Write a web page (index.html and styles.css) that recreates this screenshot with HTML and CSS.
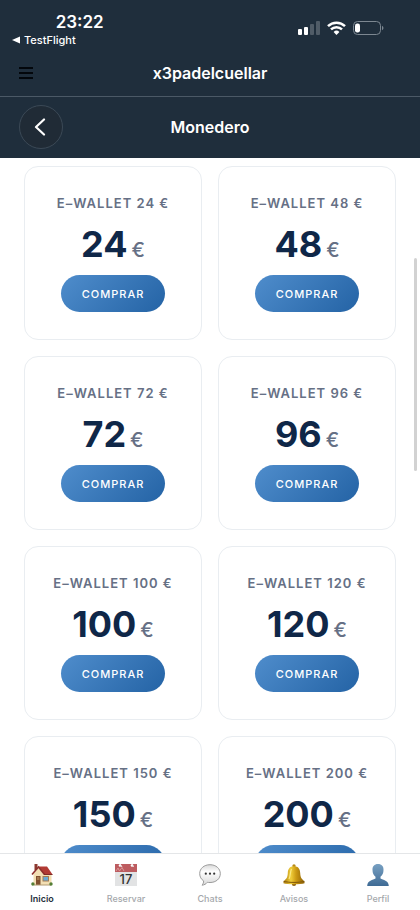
FILE: index.html
```html
<!DOCTYPE html>
<html lang="es">
<head>
<meta charset="utf-8">
<meta name="viewport" content="width=device-width, initial-scale=1">
<title>Monedero</title>
<link rel="stylesheet" href="styles.css">
</head>
<body>
<div class="app">
  <header class="top">
    <div class="status">
      <div class="status-left">
        <div class="clock">23:22</div>
        <a class="return" href="#"><svg width="8" height="8" viewBox="0 0 8 8" aria-hidden="true"><path d="M0 4 8 .5v7z" fill="#fff"/></svg>TestFlight</a>
      </div>
      <div class="status-icons">
        <svg width="22" height="14" viewBox="0 0 22 14" aria-hidden="true"><g fill="#fff"><rect x="0" y="8" width="4" height="6" rx="1"/><rect x="6" y="6" width="4" height="8" rx="1"/><g opacity=".22"><rect x="12" y="3" width="4" height="11" rx="1"/><rect x="18" y="0" width="4" height="14" rx="1"/></g></g></svg>
        <svg width="19" height="14" viewBox="0 0 19 14" aria-hidden="true"><g fill="none" stroke="#fff" stroke-width="2.5"><path d="M1 5.2a12.2 12.2 0 0 1 17 0"/><path d="M4 8.4a7.9 7.9 0 0 1 11 0"/></g><path d="M9.5 14 6.6 11a4.2 4.2 0 0 1 5.8 0z" fill="#fff"/></svg>
        <svg width="31" height="14" viewBox="0 0 31 14" aria-hidden="true"><rect x=".5" y=".5" width="27" height="13" rx="4" fill="none" stroke="#7c8791"/><rect x="2" y="2.5" width="5" height="9" rx="2.2" fill="#fff"/><path d="M29 4.8c2 .8 2 3.6 0 4.4z" fill="#7c8791"/></svg>
      </div>
    </div>
    <div class="bar club">
      <button class="menu" aria-label="Menú"><svg width="14" height="12" viewBox="0 0 14 12" aria-hidden="true"><path d="M0 1h14M0 6h14M0 11h14" stroke="#03070c" stroke-width="2"/></svg></button>
      <div class="title">x3padelcuellar</div>
    </div>
    <div class="bar section">
      <button class="back" aria-label="Volver"><svg width="12" height="18" viewBox="0 0 12 18" aria-hidden="true"><path d="M10 1.5 2 9l8 7.5" fill="none" stroke="#fff" stroke-width="2.2" stroke-linecap="round" stroke-linejoin="round"/></svg></button>
      <h1 class="title">Monedero</h1>
    </div>
  </header>

  <main class="wallets">
    <article class="card"><h2>E–WALLET 24 €</h2><p class="price">24<span>€</span></p><button class="buy">COMPRAR</button></article>
    <article class="card"><h2>E–WALLET 48 €</h2><p class="price">48<span>€</span></p><button class="buy">COMPRAR</button></article>
    <article class="card"><h2>E–WALLET 72 €</h2><p class="price">72<span>€</span></p><button class="buy">COMPRAR</button></article>
    <article class="card"><h2>E–WALLET 96 €</h2><p class="price">96<span>€</span></p><button class="buy">COMPRAR</button></article>
    <article class="card"><h2>E–WALLET 100 €</h2><p class="price">100<span>€</span></p><button class="buy">COMPRAR</button></article>
    <article class="card"><h2>E–WALLET 120 €</h2><p class="price">120<span>€</span></p><button class="buy">COMPRAR</button></article>
    <article class="card"><h2>E–WALLET 150 €</h2><p class="price">150<span>€</span></p><button class="buy">COMPRAR</button></article>
    <article class="card"><h2>E–WALLET 200 €</h2><p class="price">200<span>€</span></p><button class="buy">COMPRAR</button></article>
    <div class="scroll-thumb"></div>
  </main>

  <nav class="tabs">
    <a class="tab active" href="#">
      <svg width="22" height="22" viewBox="0 0 22 22" aria-hidden="true"><rect x="3.500" y="0" width="3" height="6" fill="#8c3a30"/><path d="M2.500 10 7.500 4l5.500 6h7.500v11h-18z" fill="#f3dfb4"/><path d="M7.500 2.500h8.500l5.500 8h-8.500z" fill="#b23a34"/><path d="M1 10.500 7.500 3l6 7.500" fill="none" stroke="#8e2f2b" stroke-width="1.600"/><path d="M13 10.500h8.500" stroke="#7d2b28"/><rect x="5" y="12" width="4.500" height="9" fill="#80502f"/><rect x="6" y="13" width="2.500" height="3" fill="#a5784d"/><rect x="12" y="12.500" width="5.500" height="4.500" fill="#69a9d6" stroke="#a37c55"/><path d="M3 21h17" stroke="#b29a72"/><circle cx="1.900" cy="20" r="1.700" fill="#547e35"/><circle cx="20" cy="20" r="1.700" fill="#547e35"/></svg>
      Inicio</a>
    <a class="tab" href="#">
      <svg width="22" height="22" viewBox="0 0 22 22" aria-hidden="true"><path d="M0 0h22v22H0z" fill="#e2e3e4"/><path d="M0 0h22v8H0z" fill="#bd5c60"/><path d="m1 7 2-3 1.500 3L7 3.500 9 7" fill="none" stroke="#d99797"/><circle cx="5" cy="1.500" r="1.300" fill="#fff"/><circle cx="17" cy="1.500" r="1.300" fill="#fff"/><path d="m5 0 2 3M17 0l1.500 3" stroke="#eee"/><text x="11" y="19.500" text-anchor="middle" class="day">17</text></svg>
      Reservar</a>
    <a class="tab" href="#">
      <svg width="22" height="22" viewBox="0 0 22 22" aria-hidden="true"><defs><linearGradient id="bubble" x2="0" y2="1"><stop stop-color="#d9d9d9"/><stop offset=".35" stop-color="#fff"/><stop offset="1" stop-color="#d8d8d8"/></linearGradient></defs><path d="M11 .7C5 .7.700 4.500.700 9.700c0 3.100 1.500 5.600 3.900 7.200.1 1.700-.5 3-1.600 4.300 2.200-.2 4-1.200 5.400-2.900.8.200 1.700.2 2.600.2 6 0 10.300-3.700 10.300-8.800S17 .7 11 .7z" fill="url(#bubble)" stroke="#9b9b9b"/><g fill="#333"><circle cx="6.800" cy="9.700" r="1.100"/><circle cx="11" cy="9.700" r="1.100"/><circle cx="15.200" cy="9.700" r="1.100"/></g></svg>
      Chats</a>
    <a class="tab" href="#">
      <svg width="22" height="22" viewBox="0 0 22 22" aria-hidden="true"><defs><linearGradient id="gold"><stop stop-color="#a97808"/><stop offset=".35" stop-color="#f1cf3c"/><stop offset=".6" stop-color="#cc9a13"/><stop offset="1" stop-color="#8d6108"/></linearGradient></defs><circle cx="11" cy="2" r="1.700" fill="#b68a17"/><circle cx="11" cy="19.800" r="2.200" fill="#8a5e10"/><path d="M11 2.200C6.500 2.200 5 5 4.800 9c-.2 4.300-1.300 6-4.300 8.200v2c4 1.500 17 1.500 21 0v-2c-3-2.200-4.100-3.900-4.300-8.200-.2-4-1.700-6.800-6.200-6.800z" fill="url(#gold)"/><path d="M.8 17.300c4.500 1.500 15.900 1.500 20.400 0" fill="none" stroke="#80570a"/><path d="M8.500 5C7 7.500 7.700 12 6 15" fill="none" stroke="#fae985" stroke-width="1.200"/></svg>
      Avisos</a>
    <a class="tab" href="#">
      <svg width="22" height="22" viewBox="0 0 22 22" aria-hidden="true"><defs><linearGradient id="person" x2="0" y2="1"><stop stop-color="#78a0c2"/><stop offset="1" stop-color="#3f6b95"/></linearGradient></defs><path d="M11 0C7.300 0 5.300 2.500 5.500 6c0 3 1.200 5.400 3 6.700v1.800C6 16.200.400 16 .200 22h21.600c-.2-6-5.800-5.800-8.300-7.500v-1.800c1.800-1.300 3-3.700 3-6.700.2-3.500-1.800-6-5.500-6z" fill="url(#person)"/></svg>
      Perfil</a>
  </nav>
</div>
</body>
</html>
```
FILE: styles.css
```css
* { box-sizing: border-box; }

body {
  margin: 0;
  font-family: Inter, "Liberation Sans", sans-serif;
  background: #fff;
}

h1, h2, p { margin: 0; }
a { color: inherit; text-decoration: none; }
button { border: 0; padding: 0; font: inherit; cursor: pointer; }
svg { display: block; }

.app {
  display: flex;
  flex-direction: column;
  height: 100vh;
}

.top {
  flex: none;
  background: #1f2e3c;
  color: #fff;
}

.status {
  display: flex;
  justify-content: space-between;
  padding: 12px 36px 0 12px;
}

.status-left {
  display: flex;
  flex-direction: column;
}

.clock {
  align-self: flex-end;
  font-size: 17px;
  line-height: 20px;
  font-weight: 600;
}

.return {
  display: flex;
  align-items: center;
  gap: 4px;
  margin-right: 28px;
  font-size: 11px;
  line-height: 16px;
  font-weight: 500;
}

.status-icons {
  display: flex;
  align-items: flex-start;
  gap: 7px;
  padding-top: 9px;
}

.bar {
  display: grid;
  grid-template-columns: 44px 1fr 44px;
  align-items: center;
  padding: 0 19px;
}

.club {
  min-height: 49px;
  padding-top: 2px;
  border-bottom: 1px solid #4b5966;
}

.section {
  min-height: 61px;
  padding-bottom: 2px;
}

.title {
  font-size: 16px;
  line-height: 20px;
  font-weight: 600;
  text-align: center;
}

.menu {
  justify-self: start;
  background: none;
}

.back {
  display: grid;
  place-items: center;
  width: 44px;
  height: 44px;
  padding-right: 3px;
  border: 1px solid #3b4956;
  border-radius: 50%;
  background: #202b36;
}

.wallets {
  position: relative;
  flex: 1;
  min-height: 0;
  overflow: hidden;
  display: grid;
  grid-template-columns: 1fr 1fr;
  align-content: start;
  gap: 16px;
  padding: 8px 24px;
}

.card {
  display: flex;
  flex-direction: column;
  align-items: center;
  padding: 27px 8px;
  border: 1px solid #e9edf1;
  border-radius: 14px;
  background: #fff;
}

.card h2 {
  font-size: 13px;
  line-height: 18px;
  font-weight: 600;
  letter-spacing: 1px;
  color: #667085;
  white-space: nowrap;
}

.price {
  display: flex;
  align-items: baseline;
  gap: 4px;
  padding: 10px 0 9px;
  font-size: 36px;
  line-height: 44px;
  font-weight: 700;
  color: #0f2748;
}

.price span {
  font-size: 20px;
  line-height: 24px;
  font-weight: 500;
  color: #667085;
}

.buy {
  width: 104px;
  height: 37px;
  border-radius: 19px;
  background: linear-gradient(135deg, #4f8dcc, #2463a5);
  color: #fff;
  font-size: 11px;
  font-weight: 500;
  letter-spacing: 1px;
}

.scroll-thumb {
  position: absolute;
  top: 100px;
  right: 3px;
  width: 3px;
  height: 213px;
  border-radius: 2px;
  background: #d2d2d2;
}

.tabs {
  flex: none;
  display: grid;
  grid-template-columns: repeat(5, 1fr);
  padding: 10px 0 5px;
  border-top: 1px solid #e4e6e8;
  background: #fff;
}

.tab {
  display: flex;
  flex-direction: column;
  align-items: center;
  gap: 6px;
  font-size: 9px;
  line-height: 13px;
  font-weight: 500;
  color: #a5a8ac;
}

.tab.active {
  font-weight: 600;
  color: #25303b;
}

.day {
  font: 500 13px Inter, sans-serif;
  fill: #333;
}
```
